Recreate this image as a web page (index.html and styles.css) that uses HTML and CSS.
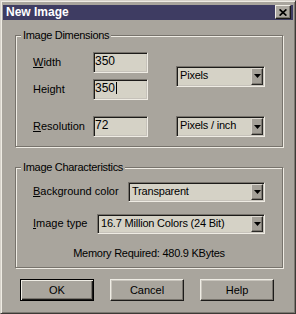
FILE: index.html
```html
<!doctype html>
<html>
<head>
<meta charset="utf-8">
<title>New Image</title>
<link rel="stylesheet" href="styles.css">
</head>
<body>
<div class="window">
    <div class="titlebar">
        <span class="title">New Image</span>
        <span class="close"><svg width="8" height="7" viewBox="0 0 8 7"><path d="M0.6 0.4 7.4 6.6M7.4 0.4 0.6 6.6" stroke="#000" stroke-width="1.7"/></svg></span>
    </div>

    <div class="group dims">
        <div class="group-title">Image Dimensions</div>
        <div class="dim-grid">
            <span class="lbl"><u>W</u>idth</span>
            <div class="field">350</div>
            <div class="combo units"><span class="value">Pixels</span><span class="arrow"><svg width="7" height="4" viewBox="0 0 7 4"><path d="M0 0h7L3.5 4z"/></svg></span></div>

            <span class="lbl">Height</span>
            <div class="field">350<span class="caret"></span></div>

            <span class="lbl low"><u>R</u>esolution</span>
            <div class="field low">72</div>
            <div class="combo low"><span class="value">Pixels / inch</span><span class="arrow"><svg width="7" height="4" viewBox="0 0 7 4"><path d="M0 0h7L3.5 4z"/></svg></span></div>
        </div>
    </div>

    <div class="group chars">
        <div class="group-title">Image Characteristics</div>
        <div class="row first">
            <span class="lbl bg-lbl"><u>B</u>ackground color</span>
            <div class="combo short"><span class="value">Transparent</span><span class="arrow"><svg width="7" height="4" viewBox="0 0 7 4"><path d="M0 0h7L3.5 4z"/></svg></span></div>
        </div>
        <div class="row">
            <span class="lbl type-lbl"><u>I</u>mage type</span>
            <div class="combo short"><span class="value">16.7 Million Colors (24 Bit)</span><span class="arrow"><svg width="7" height="4" viewBox="0 0 7 4"><path d="M0 0h7L3.5 4z"/></svg></span></div>
        </div>
        <p class="memory">Memory Required: 480.9 KBytes</p>
    </div>

    <div class="buttons">
        <span class="btn default">OK</span>
        <span class="btn">Cancel</span>
        <span class="btn">Help</span>
    </div>
</div>
</body>
</html>
```

FILE: styles.css
```css
body { margin: 0; }

.window {
    width: 296px;
    height: 314px;
    box-sizing: border-box;
    background: #a9a59d;
    border: 1px solid;
    border-color: #d6d2ca #3c3a36 #3c3a36 #d6d2ca;
    box-shadow: inset 1px 1px 0 #efece4, inset -1px -1px 0 #7c7871;
    padding: 4px 2px 0;
    font: 11px "Liberation Sans", Arial, sans-serif;
    color: #000;
}

.titlebar {
    display: flex;
    justify-content: space-between;
    align-items: flex-start;
    height: 15px;
    padding: 0 2px 0 3px;
    background: #3e3c62;
}
.title {
    color: #fff;
    font-weight: bold;
    font-size: 12px;
    line-height: 15px;
}
.close {
    display: flex;
    align-items: center;
    justify-content: center;
    width: 16px;
    height: 14px;
    box-sizing: border-box;
    background: #aca8a0;
    border: 1px solid;
    border-color: #efece4 #1c1b19 #1c1b19 #efece4;
    box-shadow: inset -1px -1px 0 #77736c;
}

/* etched group boxes */
.group {
    width: 268px;
    box-sizing: border-box;
    margin: 15px 0 0 12px;
    border: 1px solid #77736c;
    box-shadow: inset 1px 1px 0 #efece4, 1px 1px 0 #efece4;
}
.group-title {
    display: table;
    margin: -7px 0 0 5px;
    padding: 0 2px;
    line-height: 13px;
    background: #a9a59d;
    letter-spacing: -0.3px;
}
.chars { margin-top: 20px; }

.lbl { line-height: 21px; white-space: nowrap; }

.dim-grid {
    display: grid;
    grid-template-columns: 60px 55px 117px;
    grid-template-rows: 21px 21px 31px;
    row-gap: 6px;
    margin-top: 10px;
    padding: 0 0 9px 17px;
}
.dim-grid .low { align-self: end; }
.dim-grid .combo { margin-left: 28px; }
.units { grid-row: 1 / 3; grid-column: 3; align-self: center; }

.field, .combo {
    box-sizing: border-box;
    height: 21px;
    border: 1px solid;
    border-color: #77736c #efece4 #efece4 #77736c;
    box-shadow: inset 1px 1px 0 #1c1b19, inset -1px -1px 0 #c6c2ba;
    background: #d5d2c6;
}
.field {
    padding-left: 1px;
    font-size: 12px;
    line-height: 17px;
}
.caret {
    display: inline-block;
    width: 1px;
    height: 12px;
    margin-left: 1px;
    background: #000;
    vertical-align: -2px;
}

.combo { display: flex; }
.combo .value {
    flex: 1;
    padding-left: 3px;
    line-height: 17px;
    letter-spacing: -0.2px;
    white-space: nowrap;
    overflow: hidden;
}
.combo .arrow {
    display: flex;
    align-items: center;
    justify-content: center;
    width: 12px;
    margin: 1px;
    box-sizing: border-box;
    background: #a4a098;
    border: 1px solid;
    border-color: #dcd8d0 #2a2926 #2a2926 #dcd8d0;
    box-shadow: inset -1px -1px 0 #7c7871;
}

.row {
    display: flex;
    align-items: center;
    margin: 11px 17px 0;
}
.row.first { margin-top: 7px; }
.row .combo { flex: 1; height: 20px; }
.row .combo .value { line-height: 16px; }
.bg-lbl { width: 95px; }
.type-lbl { width: 64px; }

.memory {
    margin: 13px 0 7px;
    line-height: 13px;
    text-align: center;
    letter-spacing: -0.25px;
}

.buttons {
    display: flex;
    gap: 16px;
    margin: 11px 0 0 17px;
}
.btn {
    display: flex;
    align-items: center;
    justify-content: center;
    width: 74px;
    height: 22px;
    box-sizing: border-box;
    border: 1px solid;
    border-color: #efece4 #1c1b19 #1c1b19 #efece4;
    box-shadow: inset -1px -1px 0 #77736c, inset 1px 1px 0 #c9c5bd;
}
.btn.default {
    border-color: #000;
    box-shadow: inset 1px 1px 0 #efece4, inset -1px -1px 0 #1c1b19, inset -2px -2px 0 #77736c;
}
```
